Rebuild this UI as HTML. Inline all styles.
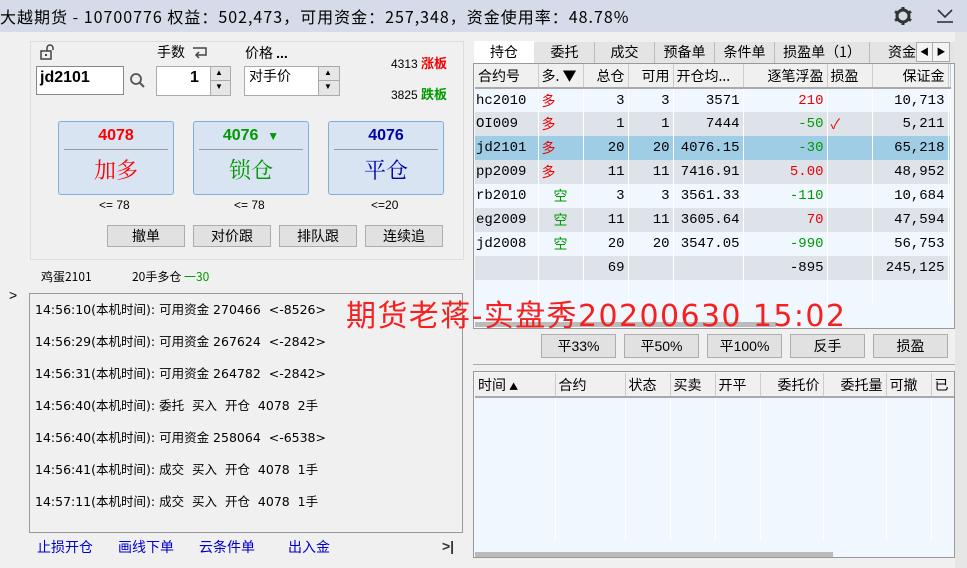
<!DOCTYPE html>
<html><head><meta charset="utf-8"><style>
*{margin:0;padding:0;box-sizing:border-box}
body{width:967px;height:568px;background:#f0f0f0;font-family:"Liberation Sans","Noto Sans CJK SC",sans-serif;font-size:13px;color:#000;position:relative;overflow:hidden}
.a{position:absolute;white-space:nowrap}
.cj{font-family:"Noto Sans CJK SC",sans-serif}
.btn{position:absolute;background:#e1e1e1;border:1px solid #adadad;text-align:center;font-family:"Noto Sans CJK SC",sans-serif;font-size:14px;line-height:20px}
.big{position:absolute;background:#d8e4f2;border:1px solid #7eaee0;border-radius:3px;text-align:center}
.big .p{font-weight:bold;font-size:16px;height:27px;line-height:27px}
.big .l{margin:0 5px;border-top:1px solid #999}
.big .t{font-family:"Noto Serif CJK SC",serif;font-size:22px;line-height:40px}
table{border-collapse:collapse;table-layout:fixed}
td{height:24px;border-right:1px solid #fff;padding:0 3px;font-family:"Liberation Mono","Noto Sans CJK SC",monospace;font-size:14px;text-align:right;overflow:hidden;white-space:nowrap}
tr.l td{background:#f0f7fe}
tr.d td{background:#dee3ea}
tr.s td{background:#9fcde6}
th{height:24px;font-weight:normal;font-family:"Noto Sans CJK SC",sans-serif;font-size:14px;background:#f0f0f0;border-right:1px solid #ccc;border-bottom:2px solid #aaa;white-space:nowrap;overflow:hidden;padding:0 3px}
.r{color:#e00}.g{color:#090}
.log{font-family:"DejaVu Sans","Noto Sans CJK SC",sans-serif;font-size:12.5px;line-height:32px}
</style></head><body>
<div class="a" style="left:0;top:0;width:967px;height:32px;background:#d6dbe9"></div>
<div class="a cj" style="left:0;top:4px;font-size:16px;letter-spacing:1px">大越期货 - 10700776 权益：502,473，可用资金：257,348，资金使用率：48.78%</div>
<svg class="a" style="top:6px;left:893px" width="20" height="20" viewBox="0 0 20 20"><circle cx="10" cy="10" r="6" fill="none" stroke="#333" stroke-width="3"/><g stroke="#333" stroke-width="3"><line x1="10" y1="1" x2="10" y2="4"/><line x1="10" y1="16" x2="10" y2="19"/><line x1="2" y1="5.5" x2="4.6" y2="7"/><line x1="15.4" y1="13" x2="18" y2="14.5"/><line x1="2" y1="14.5" x2="4.6" y2="13"/><line x1="15.4" y1="7" x2="18" y2="5.5"/></g></svg>
<svg class="a" style="left:936px;top:8px" width="18" height="16"><path d="M2 2 L9 9 L16 2" fill="none" stroke="#333" stroke-width="1.6"/><line x1="1" y1="14" x2="17" y2="14" stroke="#333" stroke-width="1.6"/></svg>

<div class="a" style="left:30px;top:41px;width:434px;height:219px;border:1px solid #ddd"></div>
<svg class="a" style="left:40px;top:44px" width="16" height="16"><rect x="1" y="7" width="10" height="8" fill="none" stroke="#444" stroke-width="1.5"/><path d="M7 7 V4 A3 3 0 0 1 13 4 V6" fill="none" stroke="#444" stroke-width="1.5"/><rect x="5" y="10" width="2" height="2" fill="#444"/></svg>
<div class="a" style="left:36px;top:66px;width:88px;height:29px;background:#fff;border:1px solid #888;font-weight:bold;font-size:16px;padding:2px 3px">jd2101</div>
<svg class="a" style="left:129px;top:72px" width="18" height="18"><circle cx="7" cy="7" r="5" fill="none" stroke="#555" stroke-width="1.8"/><line x1="11" y1="11" x2="15" y2="15" stroke="#555" stroke-width="2"/></svg>
<div class="a cj" style="left:157px;top:42px;font-size:14px">手数</div>
<svg class="a" style="left:191px;top:46px" width="18" height="14"><path d="M2 2 H15 V9 H6" fill="none" stroke="#444" stroke-width="1.5"/><path d="M8 6 L5 9 L8 12" fill="none" stroke="#444" stroke-width="1.5"/></svg>
<div class="a" style="left:156px;top:66px;width:75px;height:30px;background:#fff;border:1px solid #aaa"></div>
<div class="a" style="left:190px;top:69px;font-weight:bold;font-size:16px">1</div>
<div class="a" style="left:210px;top:67px;width:20px;height:28px;background:#e6e6e6;border-left:1px solid #aaa"></div>
<div class="a" style="left:211px;top:80px;width:19px;height:1px;background:#aaa"></div>
<div class="a" style="left:215px;top:68px;font-size:8px">▲</div><div class="a" style="left:215px;top:82px;font-size:8px">▼</div>
<div class="a cj" style="left:245px;top:43px;font-size:14px">价格 <b style="font-family:Liberation Sans">...</b></div>
<div class="a" style="left:244px;top:66px;width:96px;height:30px;background:#fff;border:1px solid #aaa"></div>
<div class="a cj" style="left:249px;top:66px;font-size:14px">对手价</div>
<div class="a" style="left:318px;top:67px;width:21px;height:28px;background:#e6e6e6;border-left:1px solid #aaa"></div>
<div class="a" style="left:319px;top:80px;width:20px;height:1px;background:#aaa"></div>
<div class="a" style="left:324px;top:68px;font-size:8px">▲</div><div class="a" style="left:324px;top:82px;font-size:8px">▼</div>
<div class="a" style="left:391px;top:53px;font-size:12px">4313 <b class="r cj" style="font-size:13px">涨板</b></div>
<div class="a" style="left:391px;top:84px;font-size:12px">3825 <b class="g cj" style="font-size:13px">跌板</b></div>

<div class="big" style="left:58px;top:121px;width:116px;height:74px"><div class="p" style="color:#f00">4078</div><div class="l"></div><div class="t" style="color:#f00">加多</div></div>
<div class="big" style="left:193px;top:121px;width:116px;height:74px"><div class="p g">4076 &nbsp;<span style="font-size:12px">▼</span></div><div class="l"></div><div class="t g">锁仓</div></div>
<div class="big" style="left:328px;top:121px;width:116px;height:74px"><div class="p" style="color:#00a">4076</div><div class="l"></div><div class="t" style="color:#00a">平仓</div></div>
<div class="a" style="left:99px;top:198px;font-size:12px">&lt;= 78</div>
<div class="a" style="left:234px;top:198px;font-size:12px">&lt;= 78</div>
<div class="a" style="left:371px;top:198px;font-size:12px">&lt;=20</div>
<div class="btn" style="left:107px;top:225px;width:78px;height:22px">撤单</div>
<div class="btn" style="left:193px;top:225px;width:78px;height:22px">对价跟</div>
<div class="btn" style="left:279px;top:225px;width:78px;height:22px">排队跟</div>
<div class="btn" style="left:365px;top:225px;width:78px;height:22px">连续追</div>
<div class="a cj" style="left:41px;top:268px;font-size:12px">鸡蛋2101</div>
<div class="a cj" style="left:132px;top:268px;font-size:12px">20手多仓 <span class="g">一30</span></div>
<div class="a" style="left:9px;top:287px;font-size:14px">&gt;</div>

<div class="a" style="left:29px;top:293px;width:434px;height:240px;border:1px solid #999"></div>
<div class="a log" style="left:35px;top:294px">
14:56:10(本机时间): 可用资金 270466 &nbsp;&lt;-8526&gt;<br>
14:56:29(本机时间): 可用资金 267624 &nbsp;&lt;-2842&gt;<br>
14:56:31(本机时间): 可用资金 264782 &nbsp;&lt;-2842&gt;<br>
14:56:40(本机时间): 委托 &nbsp;买入 &nbsp;开仓 &nbsp;4078 &nbsp;2手<br>
14:56:40(本机时间): 可用资金 258064 &nbsp;&lt;-6538&gt;<br>
14:56:41(本机时间): 成交 &nbsp;买入 &nbsp;开仓 &nbsp;4078 &nbsp;1手<br>
14:57:11(本机时间): 成交 &nbsp;买入 &nbsp;开仓 &nbsp;4078 &nbsp;1手</div>
<div class="a cj" style="left:37px;top:537px;font-size:14px;color:#00c">止损开仓</div>
<div class="a cj" style="left:118px;top:537px;font-size:14px;color:#00c">画线下单</div>
<div class="a cj" style="left:199px;top:537px;font-size:14px;color:#00c">云条件单</div>
<div class="a cj" style="left:288px;top:537px;font-size:14px;color:#00c">出入金</div>
<div class="a" style="left:442px;top:538px;font-size:14px;font-weight:bold;color:#333">&gt;|</div>

<div class="a" style="left:474px;top:42px;width:481px;height:21px;background:#e4e4e4"></div>
<div class="a cj" style="left:474px;top:41px;width:60px;height:22px;background:#fff;text-align:center;font-size:14px;line-height:22px">持仓</div>
<div class="a cj" style="left:535px;top:42px;font-size:14px;line-height:21px">
<span style="display:inline-block;width:60px;text-align:center;border-right:1px solid #bbb">委托</span><span style="display:inline-block;width:60px;text-align:center;border-right:1px solid #bbb">成交</span><span style="display:inline-block;width:60px;text-align:center;border-right:1px solid #bbb">预备单</span><span style="display:inline-block;width:60px;text-align:center;border-right:1px solid #bbb">条件单</span><span style="display:inline-block;width:95px;text-align:center;border-right:1px solid #bbb">损盈单（1）</span><span style="display:inline-block;width:46px;text-align:right">资金</span></div>
<div class="a" style="left:916px;top:42px;width:34px;height:20px;background:#f4f4f4;border:1px solid #aaa;font-size:9px;line-height:18px"><span style="display:inline-block;width:16px;text-align:center;border-right:1px solid #aaa">◀</span><span style="display:inline-block;width:16px;text-align:center">▶</span></div>

<div class="a" style="left:473px;top:63px;width:482px;height:266px;border:1px solid #999;background:#f0f7fe;overflow:hidden">
<table style="width:476px;margin-left:1px">
<colgroup><col style="width:63px"><col style="width:45px"><col style="width:45px"><col style="width:45px"><col style="width:70px"><col style="width:84px"><col style="width:45px"><col style="width:76px"><col></colgroup>
<tr><th style="text-align:left">合约号</th><th style="text-align:left">多. ▼</th><th style="text-align:right">总仓</th><th style="text-align:right">可用</th><th style="text-align:left">开仓均...</th><th style="text-align:right">逐笔浮盈</th><th style="text-align:left">损盈</th><th style="text-align:right">保证金</th><th></th></tr>
<tr class="l"><td style="text-align:left;padding:0 1px">hc2010</td><td class="r cj" style="text-align:left">多</td><td>3</td><td>3</td><td>3571</td><td class="r">210</td><td></td><td>10,713</td><td></td></tr>
<tr class="d"><td style="text-align:left;padding:0 1px">OI009</td><td class="r cj" style="text-align:left">多</td><td>1</td><td>1</td><td>7444</td><td class="g">-50</td><td class="r" style="text-align:left">✓</td><td>5,211</td><td></td></tr>
<tr class="s"><td style="text-align:left;padding:0 1px">jd2101</td><td class="r cj" style="text-align:left">多</td><td>20</td><td>20</td><td>4076.15</td><td class="g">-30</td><td></td><td>65,218</td><td></td></tr>
<tr class="d"><td style="text-align:left;padding:0 1px">pp2009</td><td class="r cj" style="text-align:left">多</td><td>11</td><td>11</td><td>7416.91</td><td class="r">5.00</td><td></td><td>48,952</td><td></td></tr>
<tr class="l"><td style="text-align:left;padding:0 1px">rb2010</td><td class="g cj" style="text-align:center">空</td><td>3</td><td>3</td><td>3561.33</td><td class="g">-110</td><td></td><td>10,684</td><td></td></tr>
<tr class="d"><td style="text-align:left;padding:0 1px">eg2009</td><td class="g cj" style="text-align:center">空</td><td>11</td><td>11</td><td>3605.64</td><td class="r">70</td><td></td><td>47,594</td><td></td></tr>
<tr class="l"><td style="text-align:left;padding:0 1px">jd2008</td><td class="g cj" style="text-align:center">空</td><td>20</td><td>20</td><td>3547.05</td><td class="g">-990</td><td></td><td>56,753</td><td></td></tr>
<tr class="d"><td></td><td></td><td>69</td><td></td><td></td><td>-895</td><td></td><td>245,125</td><td></td></tr>
<tr class="l"><td></td><td></td><td></td><td></td><td></td><td></td><td></td><td></td><td></td></tr>
</table>
<div class="a" style="left:1px;top:258px;width:301px;height:5px;background:#bbb"></div>
</div>

<div class="btn" style="left:541px;top:334px;width:75px;height:24px;line-height:22px">平<span style="font-family:Liberation Sans">33%</span></div>
<div class="btn" style="left:624px;top:334px;width:75px;height:24px;line-height:22px">平<span style="font-family:Liberation Sans">50%</span></div>
<div class="btn" style="left:707px;top:334px;width:75px;height:24px;line-height:22px">平<span style="font-family:Liberation Sans">100%</span></div>
<div class="btn" style="left:790px;top:334px;width:75px;height:24px;line-height:22px">反手</div>
<div class="btn" style="left:873px;top:334px;width:75px;height:24px;line-height:22px">损盈</div>
<div class="a" style="left:473px;top:364px;width:482px;height:1px;background:#aaa"></div>

<div class="a" style="left:473px;top:371px;width:482px;height:187px;border:1px solid #999;background:#f0f7fe;overflow:hidden">
<table style="width:520px;margin-left:1px;margin-top:1px">
<colgroup><col style="width:80px"><col style="width:70px"><col style="width:45px"><col style="width:45px"><col style="width:45px"><col style="width:63px"><col style="width:63px"><col style="width:45px"><col style="width:64px"></colgroup>
<tr><th style="text-align:left">时间 <span style="font-size:9px">▲</span></th><th style="text-align:left">合约</th><th style="text-align:left">状态</th><th style="text-align:left">买卖</th><th style="text-align:left">开平</th><th style="text-align:right">委托价</th><th style="text-align:right">委托量</th><th style="text-align:left">可撤</th><th style="text-align:left">已</th></tr>
<tr class="l"><td></td><td></td><td></td><td></td><td></td><td></td><td></td><td></td><td></td></tr>
<tr class="l"><td></td><td></td><td></td><td></td><td></td><td></td><td></td><td></td><td></td></tr>
<tr class="l"><td></td><td></td><td></td><td></td><td></td><td></td><td></td><td></td><td></td></tr>
<tr class="l"><td></td><td></td><td></td><td></td><td></td><td></td><td></td><td></td><td></td></tr>
<tr class="l"><td></td><td></td><td></td><td></td><td></td><td></td><td></td><td></td><td></td></tr>
<tr class="l"><td></td><td></td><td></td><td></td><td></td><td></td><td></td><td></td><td></td></tr>
</table>
<div class="a" style="left:1px;top:180px;width:358px;height:5px;background:#bbb"></div>
</div>
<div class="a" style="left:955px;top:32px;width:12px;height:536px;background:#e6e6e6"></div>

<div class="a" style="left:346px;top:291px;font-size:30px;color:#f52020;font-family:'DejaVu Sans','Noto Sans CJK SC',sans-serif;letter-spacing:1.4px">期货老蒋-实盘秀20200630 15:02</div>
</body></html>
